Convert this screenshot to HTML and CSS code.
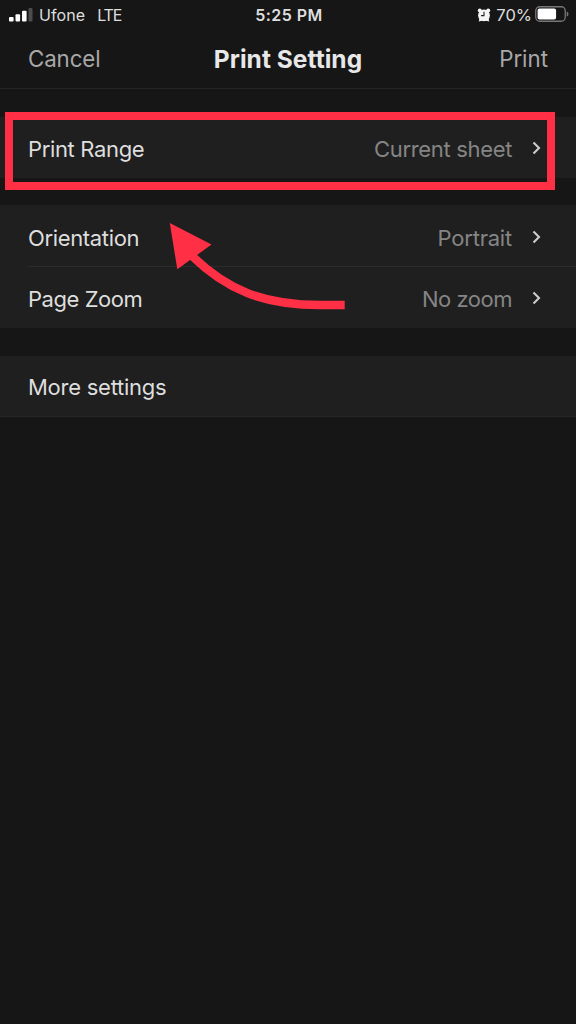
FILE: index.html
```html
<!DOCTYPE html>
<html lang="en">
<head>
<meta charset="utf-8">
<title>Print Setting</title>
<link rel="stylesheet" href="styles.css">
</head>
<body>
<div class="screen">
  <header class="status">
    <div class="carrier">
      <svg class="signal" width="24" height="15" viewBox="0 0 24 15"><g fill="#fff"><rect x="0" y="10" width="4.6" height="4.6" rx="1"/><rect x="6.5" y="7.2" width="4.6" height="7.4" rx="1"/><rect x="13" y="3.8" width="4.6" height="10.8" rx="1"/></g><rect x="19.5" y="1" width="4" height="13.6" rx="1" fill="#4c4c4c"/></svg>
      <span class="operator">Ufone</span><span class="network">LTE</span>
    </div>
    <time class="clock">5:25 PM</time>
    <div class="power">
      <svg class="alarm" width="14" height="14" viewBox="0 0 14 14"><g fill="#f4f4f4"><circle cx="7" cy="7.3" r="5.9"/><circle cx="2.8" cy="2.4" r="2"/><circle cx="11.2" cy="2.4" r="2"/><path d="M1.8 13.6 2.6 9.5 6 12.5ZM12.2 13.6 11.4 9.5 8 12.5Z"/></g><path d="M7 3.8V7.6H4" fill="none" stroke="#222" stroke-width="1.1"/></svg>
      <span class="percent">70%</span>
      <svg class="battery" width="34" height="16" viewBox="0 0 34 16"><rect x=".75" y=".75" width="29.5" height="14.5" rx="4" fill="none" stroke="#777" stroke-width="1.3"/><rect x="2.6" y="2.6" width="18.5" height="10.8" rx="2" fill="#fff"/><path d="M31.7 5.5Q33.5 6 33.5 8T31.7 10.5Z" fill="#777"/></svg>
    </div>
  </header>
  <nav class="toolbar">
    <span class="action cancel">Cancel</span>
    <h1 class="title">Print Setting</h1>
    <span class="action print">Print</span>
  </nav>
  <main class="settings">
    <section class="group highlighted">
      <div class="row"><span class="label range">Print Range</span><span class="value sheet">Current sheet</span><svg class="chevron" width="9" height="14" viewBox="0 0 9 14"><path d="M1.5 1.5 7 7 1.5 12.5"/></svg></div>
      <div class="highlight"></div>
    </section>
    <section class="group double">
      <div class="row"><span class="label orientation">Orientation</span><span class="value portrait">Portrait</span><svg class="chevron" width="9" height="14" viewBox="0 0 9 14"><path d="M1.5 1.5 7 7 1.5 12.5"/></svg></div>
      <div class="row divided"><span class="label page">Page Zoom</span><span class="value zoom">No zoom</span><svg class="chevron" width="9" height="14" viewBox="0 0 9 14"><path d="M1.5 1.5 7 7 1.5 12.5"/></svg></div>
      <svg class="arrow" width="176" height="88" viewBox="169 222 176 88"><path d="M192 256C226 289 262 305 320 305H344.7" fill="none" stroke="#ff3045" stroke-width="8.5"/><path d="M169.8 223 211.5 244.5 177.3 269.3Z" fill="#ff3045"/></svg>
    </section>
    <section class="group last">
      <div class="row"><span class="label more">More settings</span></div>
    </section>
  </main>
</div>
</body>
</html>
```
FILE: styles.css
```css
* { box-sizing: border-box; }
body { margin: 0; background: #161616; font-family: Inter, "Liberation Sans", sans-serif; color: #dedede; }
.screen { width: 576px; height: 1024px; overflow: hidden; background: #161616; }
.status { display: grid; grid-template-columns: 1fr auto 1fr; align-items: center; height: 29px; padding: 0 7px 0 9px; font-size: 16px; line-height: 28px; }
.carrier, .power { display: flex; align-items: center; white-space: nowrap; }
.signal { margin: -1px 6px 0 0; }
.operator { letter-spacing: .1px; }
.network { margin-left: 12px; letter-spacing: -1.2px; }
.clock { font-size: 16px; font-weight: 600; letter-spacing: .45px; }
.power { justify-content: flex-end; }
.alarm { margin-right: 5px; }
.percent { margin-right: 3px; font-size: 16.5px; }
.battery { margin-top: -1px; }
.toolbar { display: grid; grid-template-columns: 1fr auto 1fr; align-items: center; height: 60px; padding: 0 28px; border-bottom: 1px solid #252525; line-height: 60px; }
.action { font-size: 22.3px; color: #a8a8a8; }
.cancel { letter-spacing: -.1px; }
.print { text-align: right; }
.title { margin: 0; font-size: 24.5px; font-weight: 650; letter-spacing: .05px; color: #e8e8e8; }
.settings { display: flex; flex-direction: column; gap: 27px; padding-top: 28px; }
.group { position: relative; background: #1f1f1f; }
.row { display: flex; align-items: center; height: 61px; padding: 4px 35px 0 28px; font-size: 22px; line-height: 57px; white-space: nowrap; }
.double .row { padding-top: 5px; }
.last .row { padding-top: 2px; }
.divided { height: 62px; background: linear-gradient(#2b2b2b, #2b2b2b) 28px 0 / 548px 1px no-repeat; }
.label { letter-spacing: -.35px; }
.page { letter-spacing: -.45px; }
.more { letter-spacing: -.25px; }
.value { margin-left: auto; color: #858585; letter-spacing: -.33px; }
.portrait { letter-spacing: -.2px; }
.zoom { letter-spacing: -.48px; }
.chevron { margin: -3px 0 0 20px; fill: none; stroke: #ccc; stroke-width: 2.1; }
.last { margin-top: 1px; height: 61px; border-bottom: 1px solid #272727; }
.highlight { position: absolute; left: 5px; top: -5px; width: 550px; height: 78px; border: 8px solid #ff3045; z-index: 1; }
.arrow { position: absolute; left: 169px; top: 17px; }
```
